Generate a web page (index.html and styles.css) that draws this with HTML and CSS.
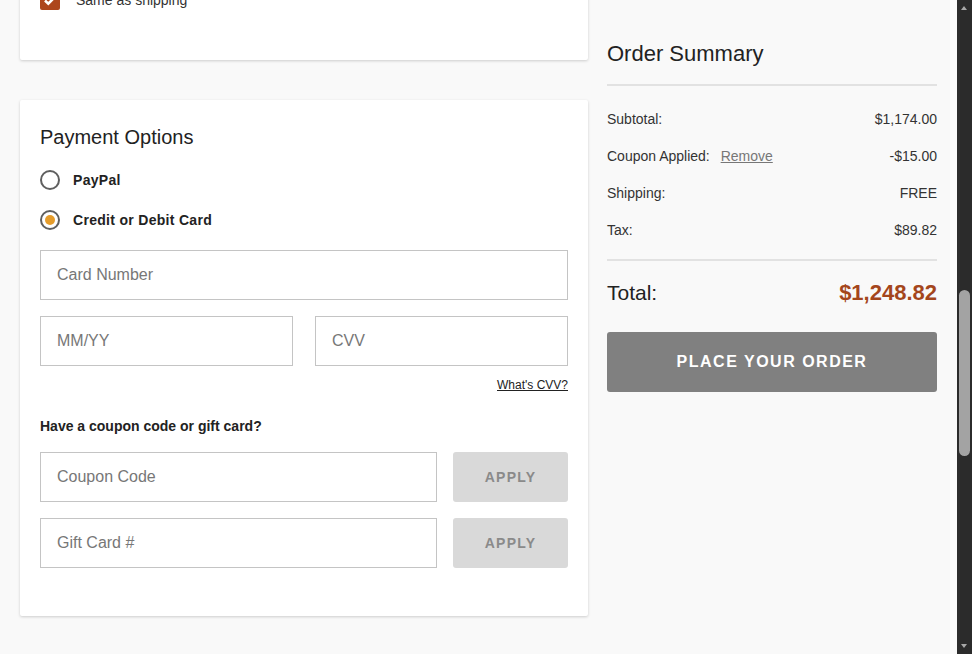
FILE: index.html
```html
<!DOCTYPE html>
<html lang="en">
<head>
<meta charset="utf-8">
<title>Checkout</title>
<link rel="stylesheet" href="styles.css">
</head>
<body>
<div class="page">
  <div class="left">
    <section class="card card-billing">
      <label class="check-row">
        <span class="checkbox">
          <svg viewBox="0 0 20 20" width="20" height="20"><path d="M5 10.5l3.3 3.2L15 6.8" fill="none" stroke="#fff" stroke-width="2.6"/></svg>
        </span>
        <span class="check-label">Same as shipping</span>
      </label>
    </section>

    <section class="card card-payment">
      <h2 class="card-title">Payment Options</h2>
      <div class="radio-list">
        <label class="radio-row"><span class="radio"></span><span class="radio-label">PayPal</span></label>
        <label class="radio-row"><span class="radio radio-on"></span><span class="radio-label">Credit or Debit Card</span></label>
      </div>
      <div class="field field-full"><span class="ph">Card Number</span></div>
      <div class="field-pair">
        <div class="field"><span class="ph">MM/YY</span></div>
        <div class="field"><span class="ph">CVV</span></div>
      </div>
      <div class="cvv-help"><a class="cvv-link">What's CVV?</a></div>
      <div class="coupon-title">Have a coupon code or gift card?</div>
      <div class="apply-row">
        <div class="field"><span class="ph">Coupon Code</span></div>
        <button class="apply-btn">APPLY</button>
      </div>
      <div class="apply-row">
        <div class="field"><span class="ph">Gift Card #</span></div>
        <button class="apply-btn">APPLY</button>
      </div>
    </section>
  </div>

  <aside class="summary">
    <h2 class="summary-title">Order Summary</h2>
    <div class="summary-rows">
      <div class="srow"><span>Subtotal:</span><span>$1,174.00</span></div>
      <div class="srow"><span>Coupon Applied: <a class="remove">Remove</a></span><span>-$15.00</span></div>
      <div class="srow"><span>Shipping:</span><span>FREE</span></div>
      <div class="srow"><span>Tax:</span><span>$89.82</span></div>
    </div>
    <div class="total-row"><span class="total-label">Total:</span><span class="total-amount">$1,248.82</span></div>
    <button class="order-btn">PLACE YOUR ORDER</button>
  </aside>
</div>

<div class="scrollbar">
  <span class="arrow arrow-up"></span>
  <span class="thumb"></span>
  <span class="arrow arrow-down"></span>
</div>
</body>
</html>
```

FILE: styles.css
```css
html, body {
  margin: 0;
  padding: 0;
  height: 100%;
  overflow: hidden;
}
body {
  background: #f9f9f9;
  font-family: "Liberation Sans", Arial, sans-serif;
  color: #222;
}
.page {
  width: 957px;
  box-sizing: border-box;
  padding: 0 20px;
  display: grid;
  grid-template-columns: 568px 1fr;
  column-gap: 19px;
  align-items: start;
}
.left {
  display: flex;
  flex-direction: column;
  gap: 40px;
  margin-top: -30px;
}
.card {
  background: #fff;
  box-shadow: 0 1px 3px rgba(0,0,0,0.18);
  border-radius: 2px;
  padding: 20px;
}
.card-billing {
  padding-bottom: 50px;
}
.check-row {
  display: flex;
  align-items: center;
  gap: 16px;
  height: 20px;
}
.checkbox {
  width: 20px;
  height: 20px;
  background: #ad461c;
  border-radius: 2px;
  display: block;
}
.checkbox svg { display: block; }
.check-label {
  font-size: 14px;
  color: #333;
}
.card-payment {
  padding: 25px 20px 48px;
}
.card-title {
  margin: 0;
  font-size: 20px;
  line-height: 24px;
  font-weight: normal;
  color: #222;
}
.radio-list {
  display: flex;
  flex-direction: column;
  gap: 20px;
  margin: 21px 0 20px;
}
.radio-row {
  display: flex;
  align-items: center;
  gap: 13px;
  height: 20px;
}
.radio {
  width: 20px;
  height: 20px;
  box-sizing: border-box;
  border: 2px solid #5f5f5f;
  border-radius: 50%;
  display: flex;
  align-items: center;
  justify-content: center;
}
.radio-on::after {
  content: "";
  width: 10px;
  height: 10px;
  border-radius: 50%;
  background: #e59c2b;
}
.radio-label {
  font-size: 14px;
  font-weight: bold;
  color: #222;
  letter-spacing: 0.3px;
}
.field {
  height: 50px;
  box-sizing: border-box;
  border: 1px solid #c4c4c4;
  background: #fff;
  display: flex;
  align-items: center;
  padding-left: 16px;
}
.ph {
  font-size: 16px;
  color: #777;
}
.field-pair {
  display: grid;
  grid-template-columns: 1fr 1fr;
  column-gap: 22px;
  margin-top: 16px;
}
.cvv-help {
  text-align: right;
  margin-top: 11px;
  line-height: 14px;
}
.cvv-link {
  font-size: 12px;
  color: #222;
  text-decoration: underline;
}
.coupon-title {
  margin-top: 25px;
  font-size: 14px;
  line-height: 18px;
  font-weight: bold;
  color: #222;
}
.apply-row {
  display: grid;
  grid-template-columns: 397px 1fr;
  column-gap: 16px;
  margin-top: 16px;
}
.coupon-title + .apply-row {
  margin-top: 17px;
}
.apply-btn {
  height: 50px;
  border: none;
  border-radius: 3px;
  background: #d9d9d9;
  color: #8a8a8a;
  font-family: "Liberation Sans", Arial, sans-serif;
  font-size: 14px;
  font-weight: bold;
  letter-spacing: 1.2px;
  padding: 0;
}
.summary {
  padding-top: 41px;
}
.summary-title {
  margin: 0;
  font-size: 22px;
  line-height: 26px;
  font-weight: normal;
  color: #222;
  padding-bottom: 17px;
  border-bottom: 2px solid #e2e2e2;
}
.summary-rows {
  padding: 15px 0 10px;
  border-bottom: 2px solid #e2e2e2;
}
.srow {
  display: flex;
  justify-content: space-between;
  height: 37px;
  line-height: 37px;
  font-size: 14px;
  color: #333;
}
.remove {
  color: #777;
  text-decoration: underline;
  margin-left: 7px;
}
.total-row {
  display: flex;
  justify-content: space-between;
  align-items: center;
  height: 26px;
  margin-top: 19px;
}
.total-label {
  font-size: 21px;
  color: #222;
}
.total-amount {
  font-size: 22px;
  font-weight: bold;
  color: #a4461c;
}
.order-btn {
  display: block;
  width: 100%;
  height: 60px;
  margin-top: 26px;
  border: none;
  border-radius: 3px;
  background: #808080;
  color: #fff;
  font-family: "Liberation Sans", Arial, sans-serif;
  font-size: 16px;
  font-weight: bold;
  letter-spacing: 1.5px;
  padding: 0;
}
.scrollbar {
  position: fixed;
  top: 0;
  right: 0;
  width: 15px;
  height: 100%;
  background: #2b2b2b;
}
.thumb {
  position: absolute;
  left: 2px;
  top: 290px;
  width: 11px;
  height: 166px;
  border-radius: 6px;
  background: #a3a3a3;
}
.arrow {
  position: absolute;
  left: 4px;
  width: 0;
  height: 0;
  border-left: 3.5px solid transparent;
  border-right: 3.5px solid transparent;
}
.arrow-up {
  top: 6px;
  border-bottom: 4px solid #a8a8a8;
}
.arrow-down {
  bottom: 6px;
  border-top: 4px solid #a8a8a8;
}
```
